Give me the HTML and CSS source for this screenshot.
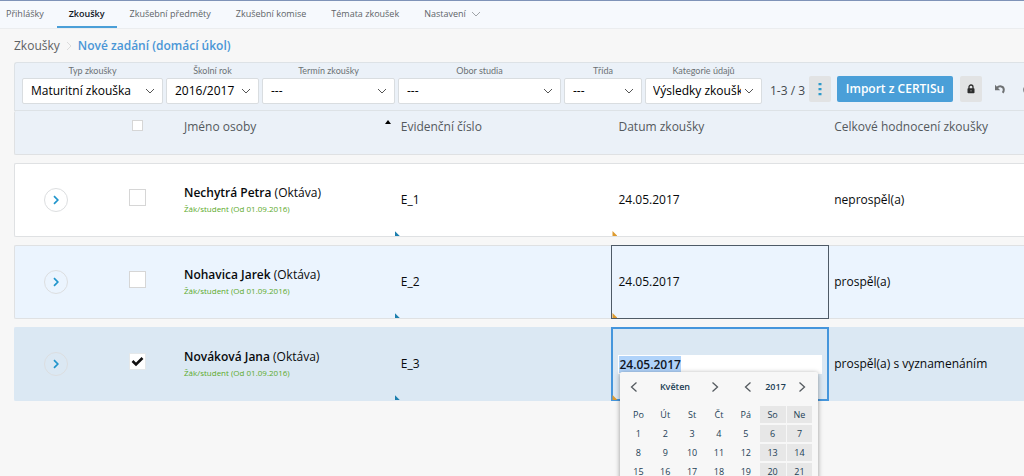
FILE: index.html
```html
<!DOCTYPE html>
<html lang="cs">
<head>
<meta charset="utf-8">
<title>Zkoušky</title>
<meta name="viewport" content="width=device-width, initial-scale=1">
<link rel="stylesheet" href="styles.css">
</head>
<body>
<svg class="sprite" aria-hidden="true">
  <symbol id="down" viewBox="0 0 10 6"><path d="M1 1l4 4 4-4" fill="none" stroke="currentColor" stroke-width="1"/></symbol>
  <symbol id="left" viewBox="0 0 8 12"><path d="M6.500 1.500L1.500 6l5 4.500" fill="none" stroke="currentColor" stroke-width="1.300"/></symbol>
  <symbol id="right" viewBox="0 0 8 12"><path d="M1.500 1.500L6.500 6l-5 4.500" fill="none" stroke="currentColor" stroke-width="1.300"/></symbol>
  <symbol id="expand" viewBox="0 0 8 10"><path d="M2 1.200L5.800 5 2 8.800" fill="none" stroke="currentColor" stroke-width="1.700"/></symbol>
</svg>
<nav class="tabs">
  <a class="tab" href="#">Přihlášky</a>
  <a class="tab tab-active" href="#">Zkoušky</a>
  <a class="tab" href="#">Zkušební předměty</a>
  <a class="tab" href="#">Zkušební komise</a>
  <a class="tab" href="#">Témata zkoušek</a>
  <a class="tab" href="#">Nastavení <svg class="tab-arrow"><use href="#down"/></svg></a>
</nav>
<main class="page">
  <div class="crumbs">
    <a href="#" class="crumb">Zkoušky</a>
    <svg class="crumb-arrow" viewBox="0 0 6 10"><path d="M1 1l4 4-4 4" fill="none" stroke="currentColor"/></svg>
    <a href="#" class="crumb crumb-current">Nové zadání (domácí úkol)</a>
  </div>
  <div class="toolbar">
    <div class="filter filter-type"><label for="type">Typ zkoušky</label><span class="pick"><select id="type"><option>Maturitní zkouška</option></select><svg><use href="#down"/></svg></span></div>
    <div class="filter filter-year"><label for="year">Školní rok</label><span class="pick"><select id="year"><option>2016/2017</option></select><svg><use href="#down"/></svg></span></div>
    <div class="filter filter-term"><label for="term">Termín zkoušky</label><span class="pick"><select id="term"><option>---</option></select><svg><use href="#down"/></svg></span></div>
    <div class="filter filter-field"><label for="field">Obor studia</label><span class="pick"><select id="field"><option>---</option></select><svg><use href="#down"/></svg></span></div>
    <div class="filter filter-class"><label for="class">Třída</label><span class="pick"><select id="class"><option>---</option></select><svg><use href="#down"/></svg></span></div>
    <div class="filter filter-cat"><label for="cat">Kategorie údajů</label><span class="pick"><select id="cat"><option>Výsledky zkoušky</option></select><svg><use href="#down"/></svg></span></div>
    <span class="count">1-3 / 3</span>
    <button class="tool tool-more" aria-label="Další"><svg viewBox="0 0 4 14"><path d="M.500 1h3v2.200h-3zM.500 6h3v2.200h-3zM.500 11h3v2.200h-3z" fill="currentColor"/></svg></button>
    <button class="import">Import z CERTISu</button>
    <button class="tool tool-lock" aria-label="Zamknout"><svg viewBox="0 0 8 10"><path d="M2 5V3a2 2 0 0 1 4 0v2" fill="none" stroke="currentColor" stroke-width="1.300"/><rect x=".500" y="4.200" width="7" height="5" rx=".800" fill="currentColor"/><path d="M4 6v1.500" stroke="#aaa" stroke-width=".800"/></svg></button>
    <button class="undo" aria-label="Zpět"><svg viewBox="0 0 10 10"><path d="M1.800 4C4 1.600 8.800 1.600 8.800 5.800 8.800 7 8.400 8 7.600 8.800" fill="none" stroke="currentColor" stroke-width="2"/><path d="M0 .800v5.400h5.200z" fill="currentColor"/></svg></button>
    <button class="undo" aria-label="Znovu"><svg viewBox="0 0 10 10"><path d="M8.200 4C6 1.600 1.200 1.600 1.200 5.800 1.200 7 1.600 8 2.400 8.800" fill="none" stroke="currentColor" stroke-width="2"/><path d="M10 .800v5.400H4.800z" fill="currentColor"/></svg></button>
  </div>
  <table class="grid">
    <thead>
      <tr class="row head">
        <th></th>
        <th class="mid"><input class="check check-all" type="checkbox" aria-label="Vybrat vše"></th>
        <th class="sorted">Jméno osoby<svg class="sort" viewBox="0 0 6 4"><path d="M0 4l3-4 3 4z"/></svg></th>
        <th>Evidenční číslo</th>
        <th>Datum zkoušky</th>
        <th>Celkové hodnocení zkoušky</th>
      </tr>
    </thead>
    <tbody>
      <tr class="row">
        <td class="mid"><button class="open" aria-label="Rozbalit"><svg><use href="#expand"/></svg></button></td>
        <td class="mid"><input class="check" type="checkbox" aria-label="Nechytrá Petra"></td>
        <td class="person"><div><b>Nechytrá Petra</b> (Oktáva)</div><small>Žák/student (Od 01.09.2016)</small></td>
        <td class="mark">E_1</td>
        <td class="mark mark-amber">24.05.2017</td>
        <td>neprospěl(a)</td>
      </tr>
      <tr class="row row-even">
        <td class="mid"><button class="open" aria-label="Rozbalit"><svg><use href="#expand"/></svg></button></td>
        <td class="mid"><input class="check" type="checkbox" aria-label="Nohavica Jarek"></td>
        <td class="person"><div><b>Nohavica Jarek</b> (Oktáva)</div><small>Žák/student (Od 01.09.2016)</small></td>
        <td class="mark">E_2</td>
        <td class="mark mark-amber hovered">24.05.2017</td>
        <td>prospěl(a)</td>
      </tr>
      <tr class="row row-selected">
        <td class="mid"><button class="open" aria-label="Rozbalit"><svg><use href="#expand"/></svg></button></td>
        <td class="mid"><input class="check" type="checkbox" aria-label="Nováková Jana" checked></td>
        <td class="person"><div><b>Nováková Jana</b> (Oktáva)</div><small>Žák/student (Od 01.09.2016)</small></td>
        <td class="mark">E_3</td>
        <td class="mark mark-amber editing">
          <input class="date" type="text" value="24.05.2017" aria-label="Datum zkoušky">
          <div class="calendar">
            <div class="cal-head">
              <div class="cal-month"><button aria-label="Předchozí měsíc"><svg><use href="#left"/></svg></button><b>Květen</b><button aria-label="Další měsíc"><svg><use href="#right"/></svg></button></div>
              <div class="cal-year"><button aria-label="Předchozí rok"><svg><use href="#left"/></svg></button><b>2017</b><button aria-label="Další rok"><svg><use href="#right"/></svg></button></div>
            </div>
            <table class="days">
              <thead><tr><th>Po</th><th>Út</th><th>St</th><th>Čt</th><th>Pá</th><th>So</th><th>Ne</th></tr></thead>
              <tbody>
                <tr><td>1</td><td>2</td><td>3</td><td>4</td><td>5</td><td>6</td><td>7</td></tr>
                <tr><td>8</td><td>9</td><td>10</td><td>11</td><td>12</td><td>13</td><td>14</td></tr>
                <tr><td>15</td><td>16</td><td>17</td><td>18</td><td>19</td><td>20</td><td>21</td></tr>
              </tbody>
            </table>
          </div>
        </td>
        <td>prospěl(a) s vyznamenáním</td>
      </tr>
    </tbody>
  </table>
</main>
<script src="script.js"></script>
</body>
</html>
```

FILE: styles.css
```css
* { box-sizing: border-box; }
body {
  margin: 0;
  background: #f7f7f7;
  color: #080a0c;
  font: 12px/18px "Open Sans", sans-serif;
}
a { color: inherit; text-decoration: none; }
b { font-weight: 600; }
button, input, select { font: inherit; color: inherit; margin: 0; }
button { border: 0; padding: 0; background: none; display: flex; align-items: center; justify-content: center; }
.sprite { display: none; }

.tabs {
  display: flex;
  gap: 1px;
  height: 29px;
  border-top: 1px solid #7f93b8;
  border-bottom: 1px solid #ebedef;
  background: #f6f9fd;
  color: #606468;
  font-size: 9px;
  line-height: 26px;
}
.tab { padding: 0 12px; white-space: nowrap; }
.tab:first-child { padding-left: 6px; }
.tab-active { color: #10161f; font-weight: 600; border-bottom: 2px solid #4a9fd8; }
.tab-arrow { width: 10px; height: 6px; margin-left: 3px; color: #a0a4a8; }

.page { min-height: calc(100vh - 29px); padding-left: 14px; overflow: hidden; }
.crumbs { display: flex; align-items: center; height: 33px; padding-top: 1px; color: #5e6164; }
.crumb-arrow { width: 6px; height: 10px; margin: 0 6px; color: #dcdcdc; }
.crumb-current { color: #4a96d6; font-weight: 600; }

.toolbar {
  display: flex;
  align-items: flex-end;
  height: 49px;
  padding: 0 0 6px 7px;
  border: 1px solid #dde2e6;
  border-right: 0;
  border-radius: 3px 0 0 0;
  background: #ebf1f8;
  overflow: hidden;
}
.filter { display: flex; flex-direction: column; flex: none; margin-right: 3px; }
.filter label { font-family: Lato, sans-serif; font-size: 9px; line-height: 14px; text-align: center; color: #6c7175; }
.filter-type { width: 141px; }
.filter-year { width: 93px; }
.filter-term { width: 133px; }
.filter-field { width: 163px; }
.filter-class { width: 78px; }
.filter-cat { width: 117px; }
.pick { position: relative; display: flex; }
.pick select {
  width: 100%;
  height: 26px;
  padding: 0 20px 0 8px;
  appearance: none;
  border: 1px solid #d9dde0;
  border-radius: 2px;
  background: #fff;
  color: #000;
}
.filter-cat select { padding-left: 7px; }
.pick svg { position: absolute; right: 8px; top: 10px; width: 10px; height: 6px; color: #555; pointer-events: none; }
.count { flex: none; width: 38px; margin: 0 1px 0 5px; line-height: 26px; color: #44494d; white-space: nowrap; }
.tool { flex: none; width: 22px; height: 26px; margin-bottom: 2px; border-radius: 2px; background: #e2e3e4; }
.tool-more { color: #2e9acb; }
.tool-more svg { width: 4px; height: 14px; }
.tool-lock { color: #2c2c2c; }
.tool-lock svg { width: 8px; height: 10px; }
.import {
  flex: none;
  width: 116px;
  height: 26px;
  margin: 0 7px 2px 6px;
  border-radius: 2px;
  background: #4a9fd8;
  color: #fff;
  font-weight: 600;
  white-space: nowrap;
}
.undo { flex: none; height: 26px; margin: 0 5px 2px 13px; color: #6e7173; }
.undo svg { width: 10px; height: 10px; }

.grid { display: grid; gap: 8px; width: 100%; }
.grid > tbody { display: grid; gap: 8px; }
.row {
  display: grid;
  grid-template-columns: 82px 80px 218fr 218fr 216fr 196fr;
  height: 74px;
  border: 1px solid #dfe1e3;
  border-right: 0;
  border-radius: 2px 0 0 2px;
  background: #fff;
}
.row > td, .row > th { display: flex; align-items: center; min-width: 0; padding: 0 6px; white-space: nowrap; text-align: left; }
.row > .mid { justify-content: center; }
.head { height: 44px; border-top: 0; background: #ebf1f8; color: #54595d; }
.row.head > th { align-items: flex-start; padding-top: 7px; font-weight: normal; }
.sorted { position: relative; }
.sort { position: absolute; right: 4px; top: 9px; width: 6px; height: 4px; }
.row-even { background: #ebf4fe; }
.row-selected { background: #dbe8f3; border-color: #dbe8f3; }

.check { appearance: none; width: 17px; height: 17px; margin-bottom: 5px; border: 1px solid #d6d6d6; background: #fff; }
.check-all { width: 11px; height: 11px; margin-top: 2px; }
.check:checked {
  border-color: #e4e8ea;
  background: #fff url("data:image/svg+xml,%3Csvg xmlns='http://www.w3.org/2000/svg' viewBox='0 0 15 15'%3E%3Cpath d='M2.500 7l3.500 3.500L12.500 4' fill='none' stroke='%23111' stroke-width='2.600'/%3E%3C/svg%3E");
}
.open { width: 24px; height: 24px; border: 1px solid #dcdee0; border-radius: 50%; color: #2095cc; }
.open svg { width: 8px; height: 10px; }
.row > .person { flex-direction: column; align-items: flex-start; justify-content: center; padding-left: 7px; }
.row > .sorted { padding-left: 7px; }
.person small { font-size: 8px; line-height: 14px; color: #5caa2c; }
.person div { line-height: 18px; }

.mark { position: relative; }
.mark::before {
  content: "";
  position: absolute;
  left: 0;
  bottom: 0;
  width: 5px;
  height: 5px;
  background: #1c7fae;
  clip-path: polygon(0 0, 100% 100%, 0 100%);
}
.mark-amber::before { background: #dd9a2e; }
.hovered { outline: 1px solid #4e5a66; }
.editing { outline: 2px solid #4596dc; outline-offset: -1px; }
.date {
  width: 100%;
  height: 19px;
  padding: 0 1px;
  border: 0;
  outline: 0;
  background: #fff;
  color: #000;
  font-weight: 600;
}
.date::selection { background: #b0d3fa; color: #10161f; }

.calendar {
  position: absolute;
  left: 8px;
  top: 44px;
  width: 198px;
  padding: 0 5px 40px 4px;
  border-radius: 2px;
  background: #f7f7f7;
  box-shadow: 0 1px 5px rgba(0, 0, 0, .4);
  color: #1c4055;
  font-size: 9px;
  line-height: 16px;
}
.cal-head { display: flex; justify-content: space-between; align-items: center; height: 29px; padding: 0 7px 0 6px; }
.cal-month, .cal-year { display: flex; align-items: center; justify-content: space-between; }
.cal-month { width: 89px; }
.cal-year { width: 62px; }
.cal-head button { color: #555b60; }
.cal-head svg { width: 8px; height: 12px; }
.days { border-spacing: 1px 2px; margin-top: 3px; width: 100%; table-layout: fixed; }
.days th, .days td { height: 17px; padding: 0; text-align: center; font-weight: normal; }
.days th:nth-child(n+6), .days td:nth-child(n+6) { background: #e7e7e7; }
```

FILE: script.js
```js
const dateField = document.querySelector(".date");
dateField.focus({ preventScroll: true });
dateField.select();
```
